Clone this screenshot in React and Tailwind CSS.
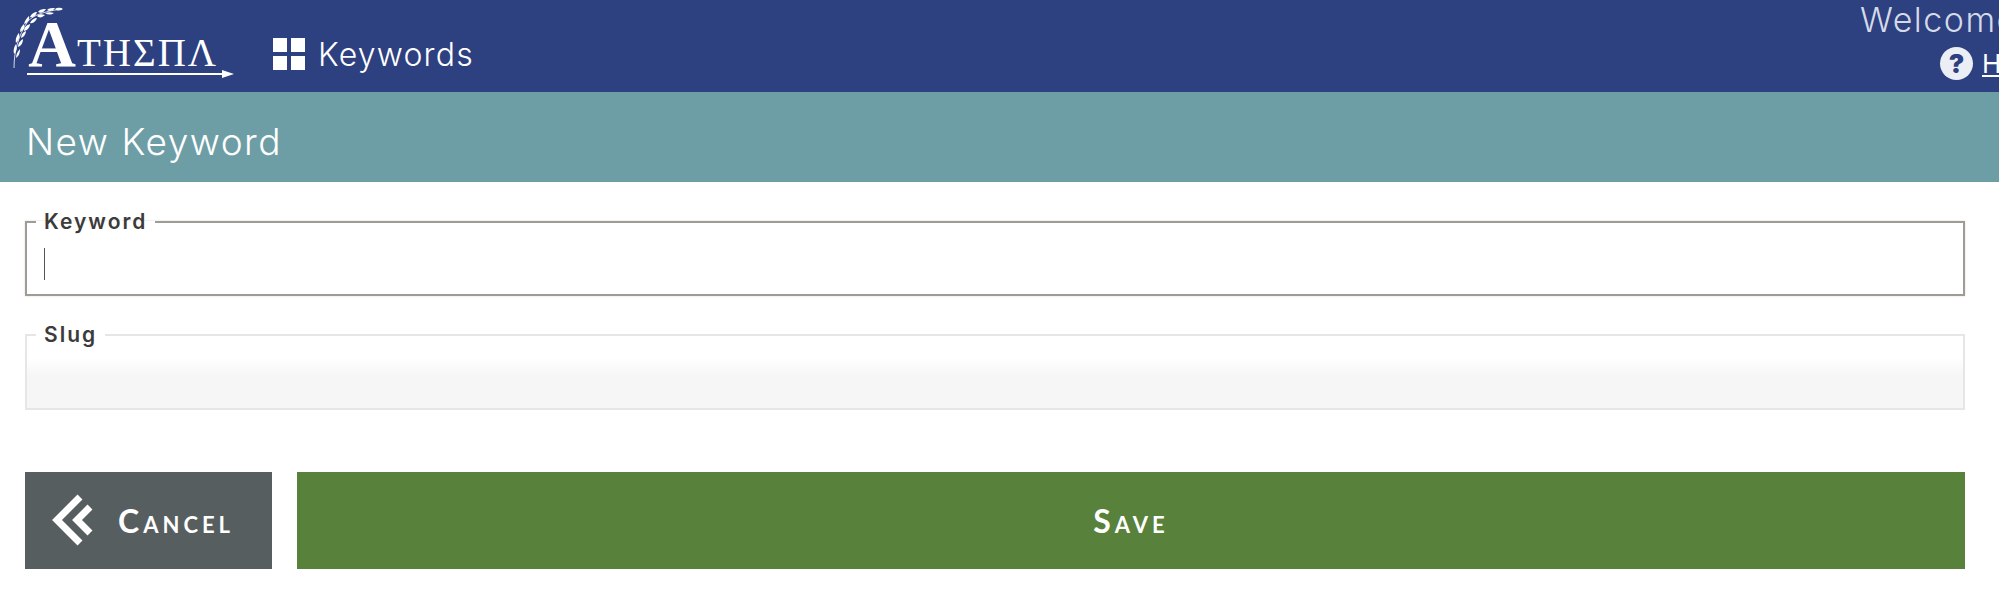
import React from 'react';

// wheat sprig above the logo
const Wheat = () => (
  <svg width="52" height="66" viewBox="0 0 52 66" className="absolute left-[13px] top-[6px]" fill="#fff">
    <path d="M1 62 C1 46 5 30 15 15 C22 8 34 5 49 3" fill="none" stroke="#fff" strokeWidth="0.8" />
    <path d="M42 3 C45 1 48 2 50 3 C47 5 44 5 42 3Z" />
    <path d="M34 4 C36 2 39 2 42 2 C40 5 37 6 34 4Z" />
    <path d="M32 7 C35 6 38 6 41 7 C38 9 35 9 32 7Z" />
    <path d="M25 6 C27 3 30 3 33 3 C31 6 28 8 25 6Z" />
    <path d="M24 10 C26 8 29 8 32 9 C29 12 26 12 24 10Z" />
    <path d="M17 11 C18 8 21 6 24 6 C23 9 21 12 17 11Z" />
    <path d="M17 17 C18 14 21 12 24 12 C23 15 20 18 17 17Z" />
    <path d="M11 18 C12 14 14 12 16 10 C17 13 15 17 11 18Z" />
    <path d="M11 25 C11 21 14 19 17 18 C17 21 15 24 11 25Z" />
    <path d="M7 26 C7 22 9 20 11 18 C12 21 11 24 7 26Z" />
    <path d="M8 32 C8 29 10 26 13 25 C13 28 11 31 8 32Z" />
    <path d="M3 37 C2 33 4 29 6 27 C7 31 6 34 3 37Z" />
    <path d="M5 41 C5 37 7 35 10 33 C10 37 8 40 5 41Z" />
    <path d="M1 48 C0 44 1 41 3 38 C4 42 4 45 1 48Z" />
    <path d="M3 52 C3 48 5 45 7 43 C7 47 6 50 3 52Z" />
  </svg>
);

const Logo = () => (
  <div className="relative w-[240px] h-[92px] shrink-0">
    <Wheat />
    <div className="absolute left-[27px] top-[16px] flex items-baseline whitespace-nowrap text-white font-['Liberation_Serif',serif] leading-none">
      <span className="w-[50px] text-center text-[66px] leading-[56px] font-bold">Α</span>
      <span className="text-[39px] tracking-[2px]">ΤΗΣΠΛ</span>
    </div>
    <div className="absolute left-[27px] top-[73px] w-[198px] h-[2px] bg-white" />
    <svg width="12" height="8" viewBox="0 0 12 8" className="absolute left-[222px] top-[70px]" fill="#fff">
      <path d="M0 0 L12 4 L0 8 Z" />
    </svg>
  </div>
);

const GridIcon = () => (
  <div className="grid grid-cols-2 gap-[4px] w-[32px] h-[32px] shrink-0">
    <div className="bg-white" />
    <div className="bg-white" />
    <div className="bg-white" />
    <div className="bg-white" />
  </div>
);

const Field = ({ label, disabled, children }) => (
  <fieldset
    className={
      disabled
        ? 'h-[86px] border-2 border-[#e6e6e6] px-[16px] m-0 bg-gradient-to-b from-white from-[30%] to-[#f6f6f6] to-[55%]'
        : 'h-[85px] border-2 border-[#a09c95] px-[16px] m-0 bg-white shadow-[0_0_2px_#d8d8d8]'
    }
  >
    <legend className="px-[8px] ml-[-7px] text-[21px] leading-[21px] font-semibold tracking-[2px] text-[#3d3a3a]">{label}</legend>
    {children}
  </fieldset>
);

export default function App() {
  return (
    <div className="w-[1999px] h-[607px] bg-white overflow-hidden font-['Inter',sans-serif]">
      {/* top bar */}
      <div className="flex h-[92px] bg-[#2d4080] text-white overflow-hidden">
        <Logo />
        <div className="flex items-center ml-[33px] pt-[16px]">
          <GridIcon />
          <span className="ml-[13px] mt-[2px] text-[32px] font-light tracking-[1.2px]">Keywords</span>
        </div>
        <div className="ml-auto w-[139px] overflow-hidden whitespace-nowrap">
          <div className="text-[34px] font-light leading-[40px] text-[#d5dae8] tracking-[1.5px]">Welcome</div>
          <div className="flex items-center mt-[7px] ml-[80px]">
            <div className="flex items-center justify-center shrink-0 w-[33px] h-[33px] rounded-full bg-[#eceef5] text-[#2d4080] text-[26px] font-black leading-none">?</div>
            <a className="ml-[9px] text-[26px] leading-[33px] underline text-white">Help</a>
          </div>
        </div>
      </div>

      {/* page title */}
      <div className="flex items-center h-[90px] bg-[#6e9ea5] pl-[26px] pt-[9px] text-white text-[37px] font-light tracking-[1.5px]">
        New Keyword
      </div>

      {/* form */}
      <div className="pl-[25px] pr-[34px] pt-[29px]">
        <Field label="Keyword">
          <div className="w-px h-[32px] bg-[#555] mt-[16px] ml-[1px]" />
        </Field>
        <div className="mt-[28px]">
          <Field label="Slug" disabled />
        </div>
        <div className="flex gap-[25px] mt-[62px]">
          <button className="flex items-center w-[247px] h-[97px] bg-[#575e60] text-white font-['Lato',sans-serif] font-bold">
            <svg width="42" height="54" viewBox="0 0 42 54" className="ml-[27px]" fill="none" stroke="#fff" strokeWidth="7">
              <path d="M28 3 L5 26 L28 49" />
              <path d="M38 13 L25 26 L38 39" />
            </svg>
            <span className="ml-[24px] text-[32px] tracking-[4px] [font-variant-caps:small-caps] leading-none">Cancel</span>
          </button>
          <button className="flex-1 h-[97px] bg-[#58813c] text-white font-['Lato',sans-serif] font-bold text-[32px] tracking-[4px] [font-variant-caps:small-caps] leading-none">
            Save
          </button>
        </div>
      </div>
    </div>
  );
}
